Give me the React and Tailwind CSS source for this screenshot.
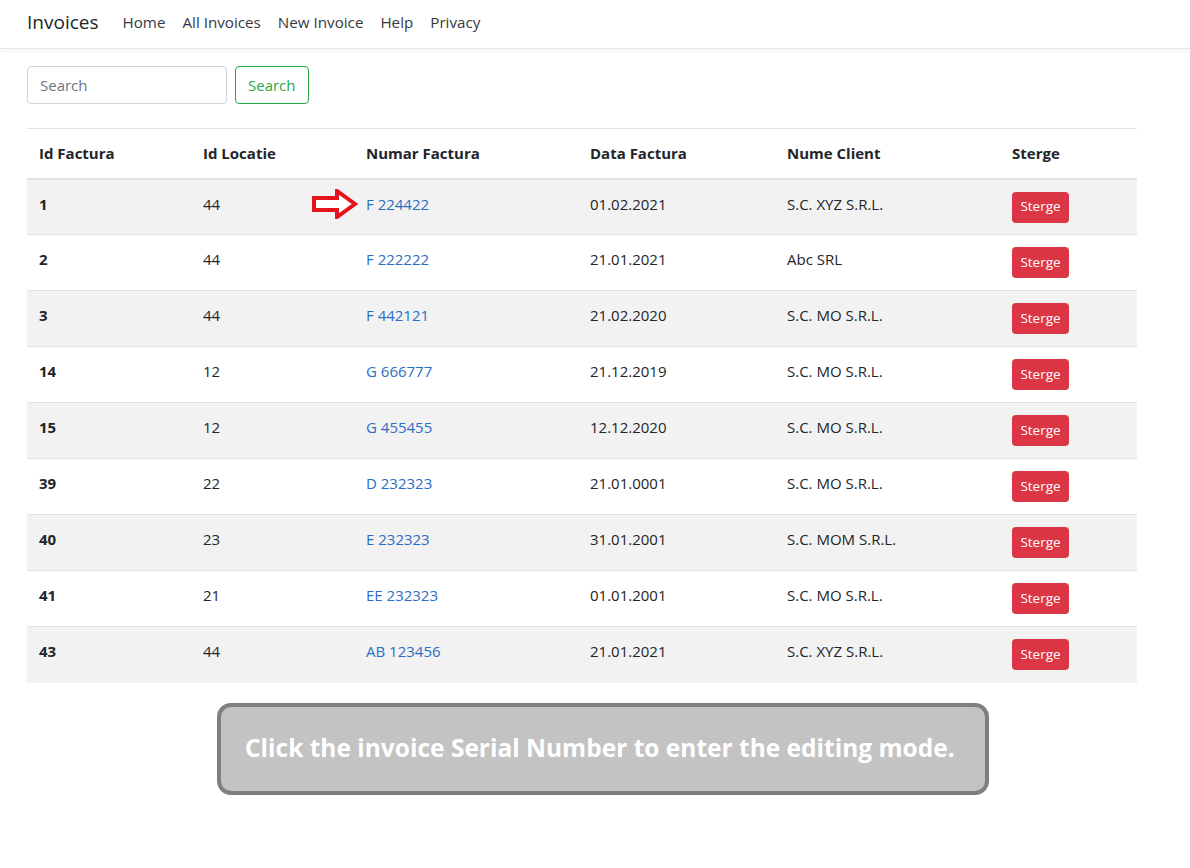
import React from 'react';

const rows = [
  { id: 1, loc: 44, nr: 'F 224422', data: '01.02.2021', client: 'S.C. XYZ S.R.L.' },
  { id: 2, loc: 44, nr: 'F 222222', data: '21.01.2021', client: 'Abc SRL' },
  { id: 3, loc: 44, nr: 'F 442121', data: '21.02.2020', client: 'S.C. MO S.R.L.' },
  { id: 14, loc: 12, nr: 'G 666777', data: '21.12.2019', client: 'S.C. MO S.R.L.' },
  { id: 15, loc: 12, nr: 'G 455455', data: '12.12.2020', client: 'S.C. MO S.R.L.' },
  { id: 39, loc: 22, nr: 'D 232323', data: '21.01.0001', client: 'S.C. MO S.R.L.' },
  { id: 40, loc: 23, nr: 'E 232323', data: '31.01.2001', client: 'S.C. MOM S.R.L.' },
  { id: 41, loc: 21, nr: 'EE 232323', data: '01.01.2001', client: 'S.C. MO S.R.L.' },
  { id: 43, loc: 44, nr: 'AB 123456', data: '21.01.2021', client: 'S.C. XYZ S.R.L.' },
];

const cols = ['w-[164px]', 'w-[163px]', 'w-[224px]', 'w-[197px]', 'w-[225px]', 'w-[137px]'];

function Arrow() {
  return (
    <svg width="46" height="30" viewBox="0 0 46 30" className="absolute left-[-54px] top-1/2 -translate-y-1/2">
      <path d="M2 9 H25 V2 L43 15 L25 28 V21 H2 Z" fill="white" stroke="#e3141b" strokeWidth="4" strokeLinejoin="miter" />
    </svg>
  );
}

export default function App() {
  return (
    <div className="min-h-screen bg-white text-[#212529]" style={{ fontFamily: '"Open Sans", "Noto Sans", sans-serif' }}>
      <nav className="h-[49px] border-b border-[#e5e5e5] shadow-[0_2px_6px_rgba(0,0,0,0.05)] flex items-center pb-[4px] px-[27px]">
        <span className="text-[19px] text-[#212529] mr-[24px]">Invoices</span>
        <div className="flex gap-[17px] text-[15.2px] text-[#343a40]">
          <a>Home</a>
          <a>All Invoices</a>
          <a>New Invoice</a>
          <a>Help</a>
          <a>Privacy</a>
        </div>
      </nav>

      <div className="px-[27px]">
        <div className="flex gap-[8px] mt-[17px]">
          <input
            placeholder="Search"
            className="w-[200px] h-[38px] border border-[#ced4da] rounded-[4px] px-[12px] text-[15px] placeholder-[#6c757d] outline-none"
          />
          <button className="h-[38px] px-[12px] border border-[#28a745] text-[#28a745] rounded-[4px] text-[15px]">Search</button>
        </div>

        <table className="mt-[24px] w-[1110px] border-collapse text-[15px] table-fixed">
          <thead>
            <tr className="h-[50px] border-t border-[#dee2e6] border-b-2">
              {['Id Factura', 'Id Locatie', 'Numar Factura', 'Data Factura', 'Nume Client', 'Sterge'].map((h, i) => (
                <th key={h} className={`${cols[i]} text-left font-bold px-[12px] align-middle`}>{h}</th>
              ))}
            </tr>
          </thead>
          <tbody>
            {rows.map((r, i) => (
              <tr key={r.id} className={`h-[56px] ${i === 0 ? '' : 'border-t'} border-[#dee2e6] leading-[24px] ${i % 2 === 0 ? 'bg-[#f2f2f2]' : 'bg-white'}`}>
                <td className="px-[12px] pt-[12px] align-top font-bold">{r.id}</td>
                <td className="px-[12px] pt-[12px] align-top">{r.loc}</td>
                <td className="px-[12px] pt-[12px] align-top">
                  <span className="relative text-[#2a6dc2]">
                    {i === 0 && <Arrow />}
                    {r.nr}
                  </span>
                </td>
                <td className="px-[12px] pt-[12px] align-top">{r.data}</td>
                <td className="px-[12px] pt-[12px] align-top">{r.client}</td>
                <td className="px-[12px] pt-[12px] align-top">
                  <button className="w-[57px] h-[31px] bg-[#dc3545] text-white text-[13.5px] rounded-[4px] leading-none">Sterge</button>
                </td>
              </tr>
            ))}
          </tbody>
        </table>

        <div className="flex mt-[20px] ml-[190px]">
          <div className="w-[772px] h-[92px] bg-[#c3c3c3] border-4 border-[#7f7f7f] rounded-[14px] flex items-center pl-[24px]">
            <span className="text-white font-bold text-[24.5px] whitespace-nowrap">Click the invoice Serial Number to enter the editing mode.</span>
          </div>
        </div>
      </div>
    </div>
  );
}
